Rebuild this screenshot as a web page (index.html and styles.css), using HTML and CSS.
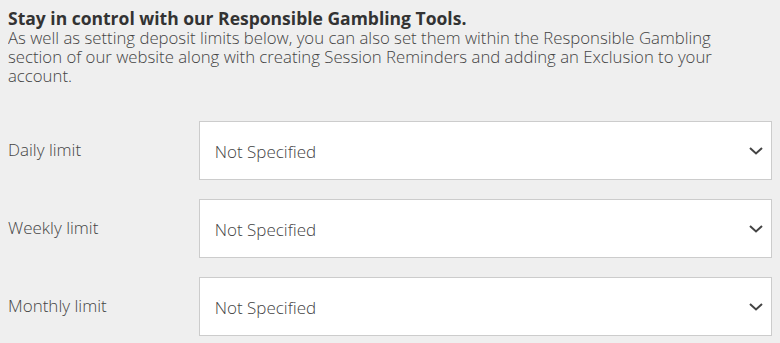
FILE: index.html
```html
<!DOCTYPE html>
<html>
<head>
<meta charset="utf-8">
<link rel="stylesheet" href="styles.css">
</head>
<body>
<div class="intro">
  <h2 class="title">Stay in control with our Responsible Gambling Tools.</h2>
  <p class="text">As well as setting deposit limits below, you can also set them within the Responsible Gambling section of our website along with creating Session Reminders and adding an Exclusion to your account.</p>
</div>
<div class="limits">
  <div class="row">
    <div class="label">Daily limit</div>
    <div class="select"><span>Not Specified</span><svg class="chev" width="14" height="8" viewBox="0 0 14 8"><path d="M1 1 L7 6.5 L13 1" fill="none" stroke="#444" stroke-width="2"/></svg></div>
  </div>
  <div class="row">
    <div class="label">Weekly limit</div>
    <div class="select"><span>Not Specified</span><svg class="chev" width="14" height="8" viewBox="0 0 14 8"><path d="M1 1 L7 6.5 L13 1" fill="none" stroke="#444" stroke-width="2"/></svg></div>
  </div>
  <div class="row">
    <div class="label">Monthly limit</div>
    <div class="select"><span>Not Specified</span><svg class="chev" width="14" height="8" viewBox="0 0 14 8"><path d="M1 1 L7 6.5 L13 1" fill="none" stroke="#444" stroke-width="2"/></svg></div>
  </div>
</div>
</body>
</html>
```
FILE: styles.css
```css
html, body {
  background: #efefef;
}
body {
  margin: 8px;
  font-family: "Open Sans", "Liberation Sans", sans-serif;
  color: #4a4a4a;
}
.intro {
  width: 720px;
}
.title {
  margin: 0;
  font-size: 17.5px;
  line-height: 20px;
  font-weight: 700;
  color: #333;
}
.text {
  margin: 0;
  font-size: 16.75px;
  line-height: 19px;
  font-weight: 300;
  color: #444;
}
.limits {
  margin-top: 36px;
  display: flex;
  flex-direction: column;
  gap: 19px;
}
.row {
  display: flex;
  align-items: center;
}
.label {
  width: 191px;
  font-size: 17px;
  font-weight: 300;
  color: #444;
  margin-top: -3px;
}
.select {
  width: 574px;
  height: 59px;
  box-sizing: border-box;
  background: #fff;
  border: 1px solid #cccccc;
  display: flex;
  align-items: center;
  justify-content: space-between;
  padding: 0 8px 0 15px;
  font-size: 17px;
  font-weight: 300;
  color: #444;
}
.select span {
  margin-top: 2px;
}
.chev {
  display: block;
}
```
